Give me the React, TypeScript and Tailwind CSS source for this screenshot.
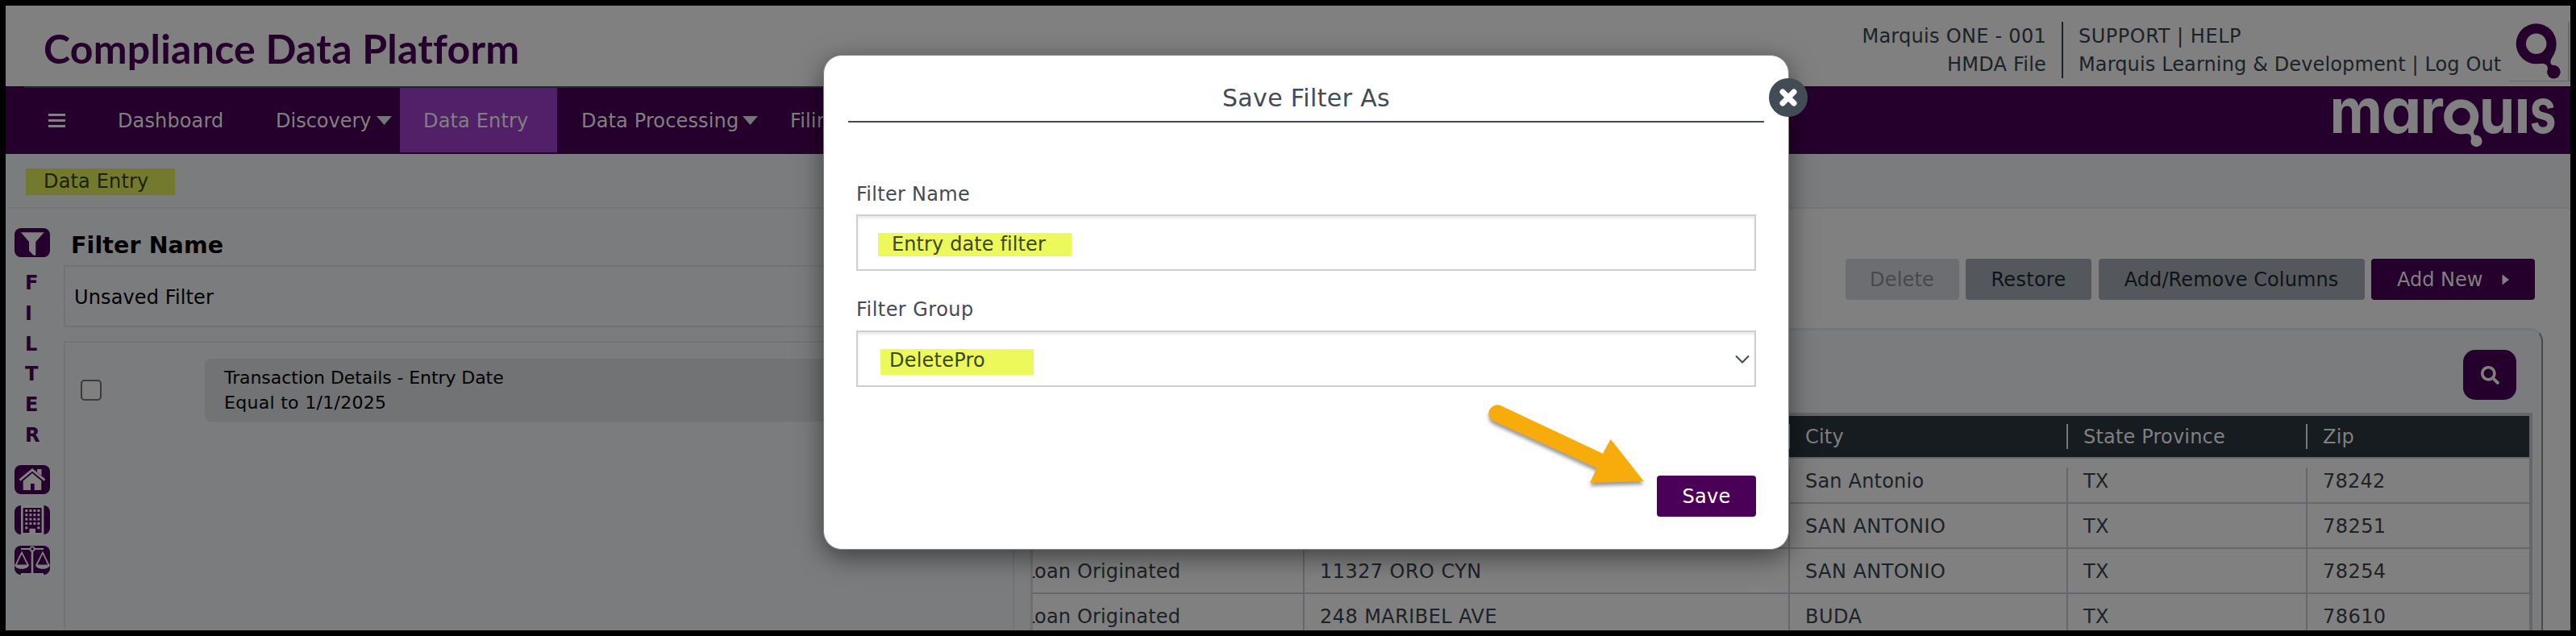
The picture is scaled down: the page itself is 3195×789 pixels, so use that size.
import React from 'react';
import { FaSearch } from 'react-icons/fa';

const Caret = () => (
  <svg className="h-[11px] w-[19px]" viewBox="0 0 19 11">
    <path d="M0 0H19L9.5 11Z" fill="#727674" />
  </svg>
);

const Mark = () => (
  <>
    <path fillRule="evenodd" d="M33.7 2.3A25 25 0 1 1 33.7 52.3A25 25 0 1 1 33.7 2.3ZM33.7 14.6A12.7 12.7 0 1 0 33.7 40A12.7 12.7 0 1 0 33.7 14.6Z" />
    <path d="M58.2 33C55.5 44 50.5 46 51.5 51C52 53.6 54 54 57 54.2L48 61C48.5 54 46 50.5 37 52L46 40Z" />
    <circle cx="55.4" cy="62.3" r="8.3" />
  </>
);

const SideIcon = ({ children }: { children: React.ReactNode }) => (
  <svg className="block h-9 w-11 shrink-0 rounded-lg bg-[#26002d]" viewBox="0 0 44 36">
    {children}
  </svg>
);

function Header() {
  return (
    <header className="flex h-[100px] shrink-0 bg-[#808080] text-[24px] text-[#1c2226]">
      <h1 className="pl-[47px] pt-[23px] font-['Lato'] text-[50px] font-bold leading-[60px] tracking-[0.24px] text-[#26002d]">
        Compliance Data Platform
      </h1>
      <div className="ml-auto mr-px mt-5 flex h-[74px] items-start leading-[34.5px]">
        <div className="h-[70px] border-r-2 border-[#1c2226] pr-[19px] pt-px text-right">
          <div className="tracking-[0.28px]">Marquis ONE - 001</div>
          <div className="tracking-[0.22px]">HMDA File</div>
        </div>
        <div className="w-[553px] pl-[19px] pt-px">
          <div className="tracking-[0.53px]">SUPPORT | HELP</div>
          <div className="tracking-[0.13px]">Marquis Learning &amp; Development | Log Out</div>
        </div>
        <div className="h-[74px] w-[75px] border-b border-r-2 border-[#69696b]">
          <svg className="block h-[74px] w-[74px]" viewBox="0 0 74 74" fill="#26002d">
            <Mark />
          </svg>
        </div>
      </div>
    </header>
  );
}

function Wordmark() {
  return (
    <svg className="ml-auto h-[84px] w-[298px] overflow-visible" viewBox="2890 107 298 84" fill="#808080">
      <g className="font-['Inter'] text-[77px] font-bold [font-feature-settings:'cv11']">
        <text x="2889.5" y="165.4" textLength="65.5" lengthAdjust="spacingAndGlyphs">m</text>
        <text x="2953.6" y="165.4" textLength="50" lengthAdjust="spacingAndGlyphs">a</text>
        <text x="3001.6" y="165.4" textLength="30" lengthAdjust="spacingAndGlyphs">r</text>
        <text x="3074.7" y="165.4" textLength="44.5" lengthAdjust="spacingAndGlyphs">u</text>
        <text x="3118.5" y="165.4" textLength="20" lengthAdjust="spacingAndGlyphs">ı</text>
        <text x="3137.5" y="165.4" textLength="33" lengthAdjust="spacingAndGlyphs">s</text>
      </g>
      <g transform="translate(3023.6 121.2) scale(0.864)">
        <Mark />
      </g>
    </svg>
  );
}

function Nav() {
  return (
    <nav className="flex h-[84px] shrink-0 bg-[#26002d] text-[24px] text-[#808080]">
      <div className="ml-[23px] flex w-[2150px] border-t-2 border-[#1e282b]">
        <div className="flex h-20 w-[116px] flex-col justify-center gap-[4px] pl-[30px]">
          <div className="h-[3px] w-[21px] bg-[#808080]" />
          <div className="h-[3px] w-[21px] bg-[#808080]" />
          <div className="h-[3px] w-[21px] bg-[#808080]" />
        </div>
        <div className="flex h-20 w-[196px] items-center pt-px tracking-[0.13px]">Dashboard</div>
        <div className="flex h-20 w-[154px] items-center justify-between pr-[10px] pt-px">
          Discovery
          <Caret />
        </div>
        <div className="flex h-20 w-[195px] items-center bg-[#522069] pl-[29px] pt-px tracking-[0.16px]">Data Entry</div>
        <div className="flex h-20 w-[289px] items-center justify-between pl-[30px] pr-[40px] pt-px tracking-[0.15px]">
          Data Processing
          <Caret />
        </div>
        <div className="flex h-20 items-center pt-px tracking-[0.15px]">Filing</div>
      </div>
      <Wordmark />
    </nav>
  );
}

function SideRail() {
  return (
    <aside className="flex w-[72px] shrink-0 flex-col pl-[11px] pt-6">
      <SideIcon>
        <path d="M8 5.3H36.7L26.3 17V33.7H23.7L18 28V17Z" fill="#808080" />
      </SideIcon>
      <div className="mb-[17px] mt-[14px] flex flex-col pl-[13px] text-[24px] font-bold leading-[37.8px] text-[#26002d]">
        {['F', 'I', 'L', 'T', 'E', 'R'].map((c) => (
          <span key={c}>{c}</span>
        ))}
      </div>
      <div className="flex flex-col gap-[14px]">
        <SideIcon>
          <g fill="#808080">
            <path d="M28.3 5H33.3V13L28.3 9Z" />
            <path d="M10.7 31V19.5L22 10L33.3 19.5V31H24.7V23H20V31Z" />
          </g>
          <path d="M6.2 19L22 6L37.8 19" fill="none" stroke="#26002d" strokeWidth="5" />
          <path d="M6.5 18.6L22 5.8L37.5 18.6" fill="none" stroke="#808080" strokeWidth="2.8" />
          <path d="M28.3 5H33.3V13L28.3 9Z" fill="#808080" />
        </SideIcon>
        <SideIcon>
          <path d="M8 0H36.4V36H8Z" fill="#808080" />
          <path d="M10.6 3H33.6V34H26V28.7H18.4V34H10.6Z" fill="#26002d" />
          <g fill="#808080">
            {[5, 10.3, 15.7, 21].map((y) =>
              [13.3, 18.4, 23.4, 28.4].map((x) => <rect key={`${x}-${y}`} x={x} y={y} width="3" height="3" />)
            )}
            <rect x="13.3" y="26.3" width="3" height="3" />
            <rect x="28.4" y="26.3" width="3" height="3" />
          </g>
        </SideIcon>
        <SideIcon>
          <g fill="none" stroke="#808080" strokeWidth="1.8">
            <path d="M8 4H19M25 4H36M8 35H36" />
            <circle cx="22" cy="4" r="2.6" />
            <path d="M22 7V35" strokeWidth="2.6" />
            <path d="M1.5 24L9 8.5L16.8 24M27.2 24L35 8.5L42.5 24" />
          </g>
          <path d="M0 23.5H18C17.5 30.5 .5 30.5 0 23.5ZM26 23.5H44C43.5 30.5 26.5 30.5 26 23.5Z" fill="#808080" />
        </SideIcon>
      </div>
    </aside>
  );
}

function FilterPanel() {
  return (
    <section className="flex w-[1179px] shrink-0 flex-col text-black">
      <h2 className="h-[70px] shrink-0 pl-[9px] pt-[21px] text-[28.5px] font-bold leading-[50px] tracking-[0.1px]">Filter Name</h2>
      <div className="flex h-[77px] shrink-0 items-center border-2 border-[#727375] pl-[11px] pt-[3px] text-[24px] tracking-[0.12px]">
        Unsaved Filter
      </div>
      <div className="mt-[17px] grow border-2 border-b-0 border-[#727375]">
        <div className="mt-5 flex h-[78px] items-center pl-[19px] pr-4">
          <div className="h-[26px] w-[26px] rounded-[5px] border-2 border-[#3b3b3b] bg-[#808080]" />
          <div className="ml-32 flex h-full grow flex-col justify-center rounded-lg bg-[#727375] pl-6 text-[22px] leading-[31px]">
            <div className="-tracking-[0.08px]">Transaction Details - Entry Date</div>
            <div className="tracking-[0.3px]">Equal to 1/1/2025</div>
          </div>
        </div>
      </div>
    </section>
  );
}

const rows = [
  ['Loan Originated', '', 'San Antonio', 'TX', '78242'],
  ['Loan Originated', '', 'SAN ANTONIO', 'TX', '78251'],
  ['Loan Originated', '11327 ORO CYN', 'SAN ANTONIO', 'TX', '78254'],
  ['Loan Originated', '248 MARIBEL AVE', 'BUDA', 'TX', '78610'],
];

function DataTable() {
  return (
    <div className="ml-5 mr-[11px] grow border-l-[3px] border-r-4 border-t-4 border-[#66676b] border-l-[#6f6f71] text-[24px]">
      <div className="grid h-[53px] grid-cols-[335px_602px_345px_297px_1fr] items-center border-b-2 border-[#66676b] bg-[#171c20] text-[#808080]">
        {['', '', 'City', 'State Province', 'Zip'].map((h, i) => (
          <div key={i} className={i ? 'h-[31px] border-l-2 border-[#77797b] pl-[19px] leading-[33px] tracking-[0.19px]' : ''}>
            {h}
          </div>
        ))}
      </div>
      {rows.map((r, ri) => (
        <div key={ri} className="grid h-14 grid-cols-[335px_602px_345px_297px_1fr] items-end overflow-hidden border-b-2 border-[#66676b] bg-[#808080] leading-[56px] text-[#1c2226]">
          {r.map((c, i) => (
            <div
              key={i}
              className={
                i === 0
                  ? 'h-[54px] overflow-hidden'
                  : ri === 0
                    ? 'h-[43px] border-l-2 border-[#66676b] pl-[19px]'
                    : 'h-[54px] border-l-2 border-[#66676b] pl-[19px]'
              }
            >
              <div
                className={
                  i === 0
                    ? '-ml-[11px] tracking-[0.15px]'
                    : ri === 0
                      ? '-mt-[11px] tracking-[0.2px]'
                      : 'tracking-[0.44px]'
                }
              >
                {c}
              </div>
            </div>
          ))}
        </div>
      ))}
    </div>
  );
}

function DataPanel() {
  return (
    <section className="flex grow flex-col bg-[#808080]">
      <div className="flex h-[148px] shrink-0 justify-end gap-[8.5px] pr-[44px] pt-[62px] text-[24px] text-[#101316]">
        <div className="flex h-[51px] w-[141px] items-center justify-center rounded-[4px] bg-[#6d6e72] tracking-[0.18px] text-[#47494d]">Delete</div>
        <div className="flex h-[51px] w-[156px] items-center justify-center rounded-[4px] bg-[#54585c] tracking-[0.28px]">Restore</div>
        <div className="flex h-[51px] w-[330px] items-center justify-center rounded-[4px] bg-[#54585c] tracking-[0.09px]">Add/Remove Columns</div>
        <div className="flex h-[51px] w-[203px] items-center justify-between rounded-[4px] bg-[#26002d] pl-8 pr-8 text-[#808080]">
          Add New
          <svg className="h-[14px] w-[9px]" viewBox="0 0 9 14">
            <path d="M0.5 0.5V13.5L9 7Z" fill="#808080" />
          </svg>
        </div>
      </div>
      <div className="mr-[34px] flex grow flex-col rounded-tr-[16px] border-r-2 border-t-[3px] border-r-[#4a4b4d] border-t-[#767677] bg-[#7b7c7e]">
        <div className="flex h-[102px] shrink-0 justify-end pr-[31px] pt-6">
          <div className="flex h-[62px] w-[66px] items-center justify-center rounded-[15px] bg-[#26002d] text-[#808080]">
            <FaSearch className="h-[23px] w-[23px]" />
          </div>
        </div>
        <DataTable />
      </div>
    </section>
  );
}

function SaveDialog() {
  return (
    <div className="absolute left-[1014px] top-[61px] flex h-[614px] w-[1198px] flex-col rounded-[23px] border border-[#868686] bg-white text-[24px] text-[#434b55] shadow-[0_9px_32px_rgba(0,0,0,0.5)]">
      <div className="mx-[30px] h-[83px] border-b-2 border-[#434b55] pt-[24px] text-center text-[30px] leading-[58px] tracking-[0.36px]">
        Save Filter As
      </div>
      <div className="flex flex-col px-10 pt-[75px]">
        <label className="leading-7 tracking-[0.29px]">Filter Name</label>
        <div className="mt-[11px] flex h-[70px] border-2 border-[#cfcfcf] pl-[25px] pt-[21px] shadow-[inset_0_3px_3px_rgba(0,0,0,0.08)]">
          <span className="h-[29px] w-[240px] bg-[#ebf95b] pl-[17px] leading-[28px] tracking-[0.11px] text-[#3e461f]">Entry date filter</span>
        </div>
        <label className="mt-[34px] leading-7 tracking-[0.46px]">Filter Group</label>
        <div className="mt-3 flex h-[70px] justify-between border-2 border-[#cfcfcf] pl-[28px] pr-[6px] pt-[21px] shadow-[inset_0_3px_3px_rgba(0,0,0,0.08)]">
          <span className="h-[32px] w-[190px] bg-[#ebf95b] pl-[11px] leading-[28px] tracking-[0.22px] text-[#3e461f]">DeletePro</span>
          <svg className="mt-[7px] h-[11px] w-[18px]" viewBox="0 0 18 11">
            <path d="M1 1.5L9 9.5L17 1.5" fill="none" stroke="#434b55" strokeWidth="2" />
          </svg>
        </div>
        <button className="mt-[110px] h-[51px] w-[123px] self-end rounded-[4px] bg-[#4b0058] tracking-[0.29px] text-white">Save</button>
      </div>
      <button className="absolute -right-[24px] top-[28px] flex h-12 w-12 items-center justify-center rounded-full bg-[#434c55]">
        <svg className="h-[22px] w-[22px]" viewBox="0 0 22 22">
          <path d="M4 4L18 18M18 4L4 18" stroke="#fff" strokeWidth="7" strokeLinecap="round" />
        </svg>
      </button>
      <svg
        className="absolute left-[819px] top-[427px] h-[125px] w-[210px] drop-shadow-[0_4px_2px_rgba(0,0,0,0.4)]"
        viewBox="1841 496 210 125"
      >
        <path
          d="M1861.5 503.3L1988 562.7L1997.7 545L2038.7 597L1972 599L1980.5 580.7L1852.5 522.5A10.6 10.6 0 0 1 1861.5 503.3Z"
          fill="#f8ac0b"
        />
      </svg>
    </div>
  );
}

export default function App() {
  return (
    <div className="h-[789px] w-[3195px] overflow-hidden bg-black p-[7px] font-['DejaVu_Sans',sans-serif]">
      <div className="relative flex h-[775px] w-[3181px] flex-col overflow-hidden bg-[#7b7c7e]">
        <Header />
        <Nav />
        <div className="flex h-[68px] shrink-0 border-b-2 border-[#747577] pl-[25px] pt-[18px]">
          <span className="h-[33px] w-[185px] bg-[#747a2d] pl-[22px] text-[24px] leading-[32px] tracking-[0.16px] text-[#1d2110]">Data Entry</span>
        </div>
        <main className="flex min-h-0 grow">
          <SideRail />
          <FilterPanel />
          <DataPanel />
        </main>
        <SaveDialog />
      </div>
    </div>
  );
}
